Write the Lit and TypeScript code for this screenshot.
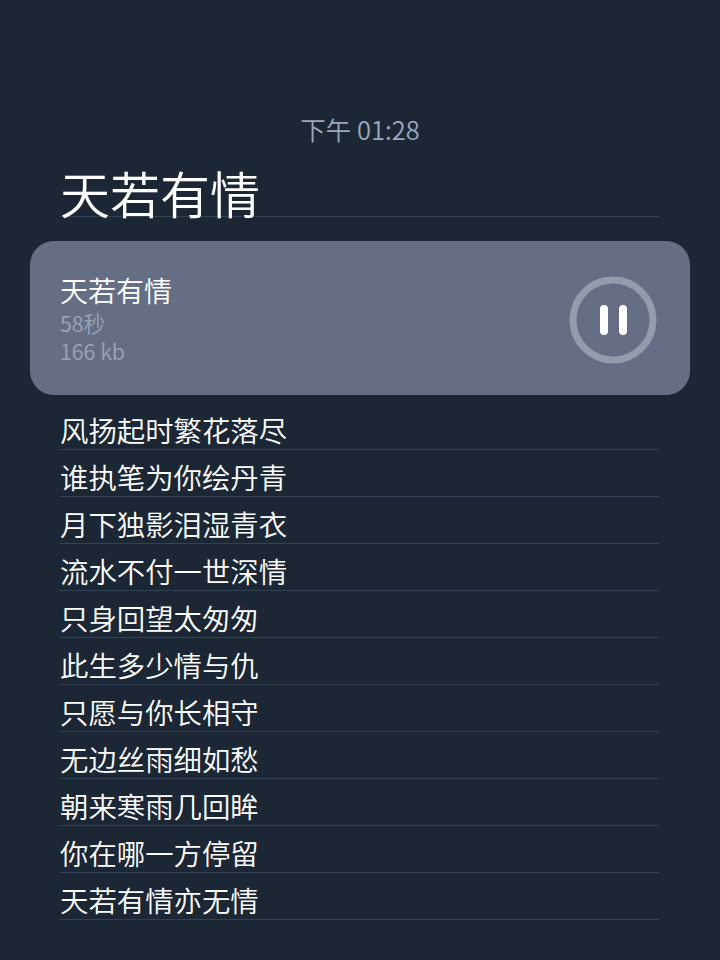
import { LitElement, html, css } from "lit";
import { customElement } from "lit/decorators.js";

const LINES = ["风扬起时繁花落尽","谁执笔为你绘丹青","月下独影泪湿青衣","流水不付一世深情","只身回望太匆匆","此生多少情与仇","只愿与你长相守","无边丝雨细如愁","朝来寒雨几回眸","你在哪一方停留","天若有情亦无情"];

@customElement("app-root")
export class AppRoot extends LitElement {
  static styles = css`
    :host { display: block; width: 720px; height: 960px; background: #1c2735; overflow: hidden;
      font-family: "Noto Sans CJK SC", "Noto Sans", sans-serif; font-weight: 350; color: #fff; }
    .time { padding: 111px 0 2px; line-height: 35px; text-align: center; font-size: 25.5px; color: #9aa7bc; }
    .title { margin: 0 61px 0 60px; padding-top: 20px; height: 48px; line-height: 48px; font-size: 50px; border-bottom: 1px solid #334155; }
    .card { margin: 24px 30px 0; height: 154px; border-radius: 24px; background: #646f86; padding: 0 30px; display: flex; align-items: center; justify-content: space-between; box-sizing: border-box; }
    .info { margin-top: 2px; }
    .name { font-size: 28px; line-height: 36px; margin-top: -1px; padding-bottom: 1px; }
    .meta { font-size: 21.5px; line-height: 28px; color: #9aa5b9; }
    .play { width: 88px; height: 88px; margin: 4px 3px 0 0; }
    .list { margin: 8px 61px 0 60px; }
    .row { padding-top: 8px; height: 38px; line-height: 38px; font-size: 28.4px; white-space: nowrap; border-bottom: 1px solid #334155; }
  `;
  render() {
    return html`
      <div class="time">下午 01:28</div>
      <div class="title">天若有情</div>
      <div class="card">
        <div class="info">
          <div class="name">天若有情</div>
          <div class="meta">58秒</div>
          <div class="meta">166 kb</div>
        </div>
        <svg class="play" viewBox="0 0 88 88">
          <circle cx="44" cy="44" r="40" fill="none" stroke="#939cad" stroke-width="7"/>
          <rect x="31" y="29" width="8" height="30" rx="4" fill="#fff"/>
          <rect x="50" y="29" width="8" height="30" rx="4" fill="#fff"/>
        </svg>
      </div>
      <div class="list">${LINES.map((l) => html`<div class="row">${l}</div>`)}</div>
    `;
  }
}
